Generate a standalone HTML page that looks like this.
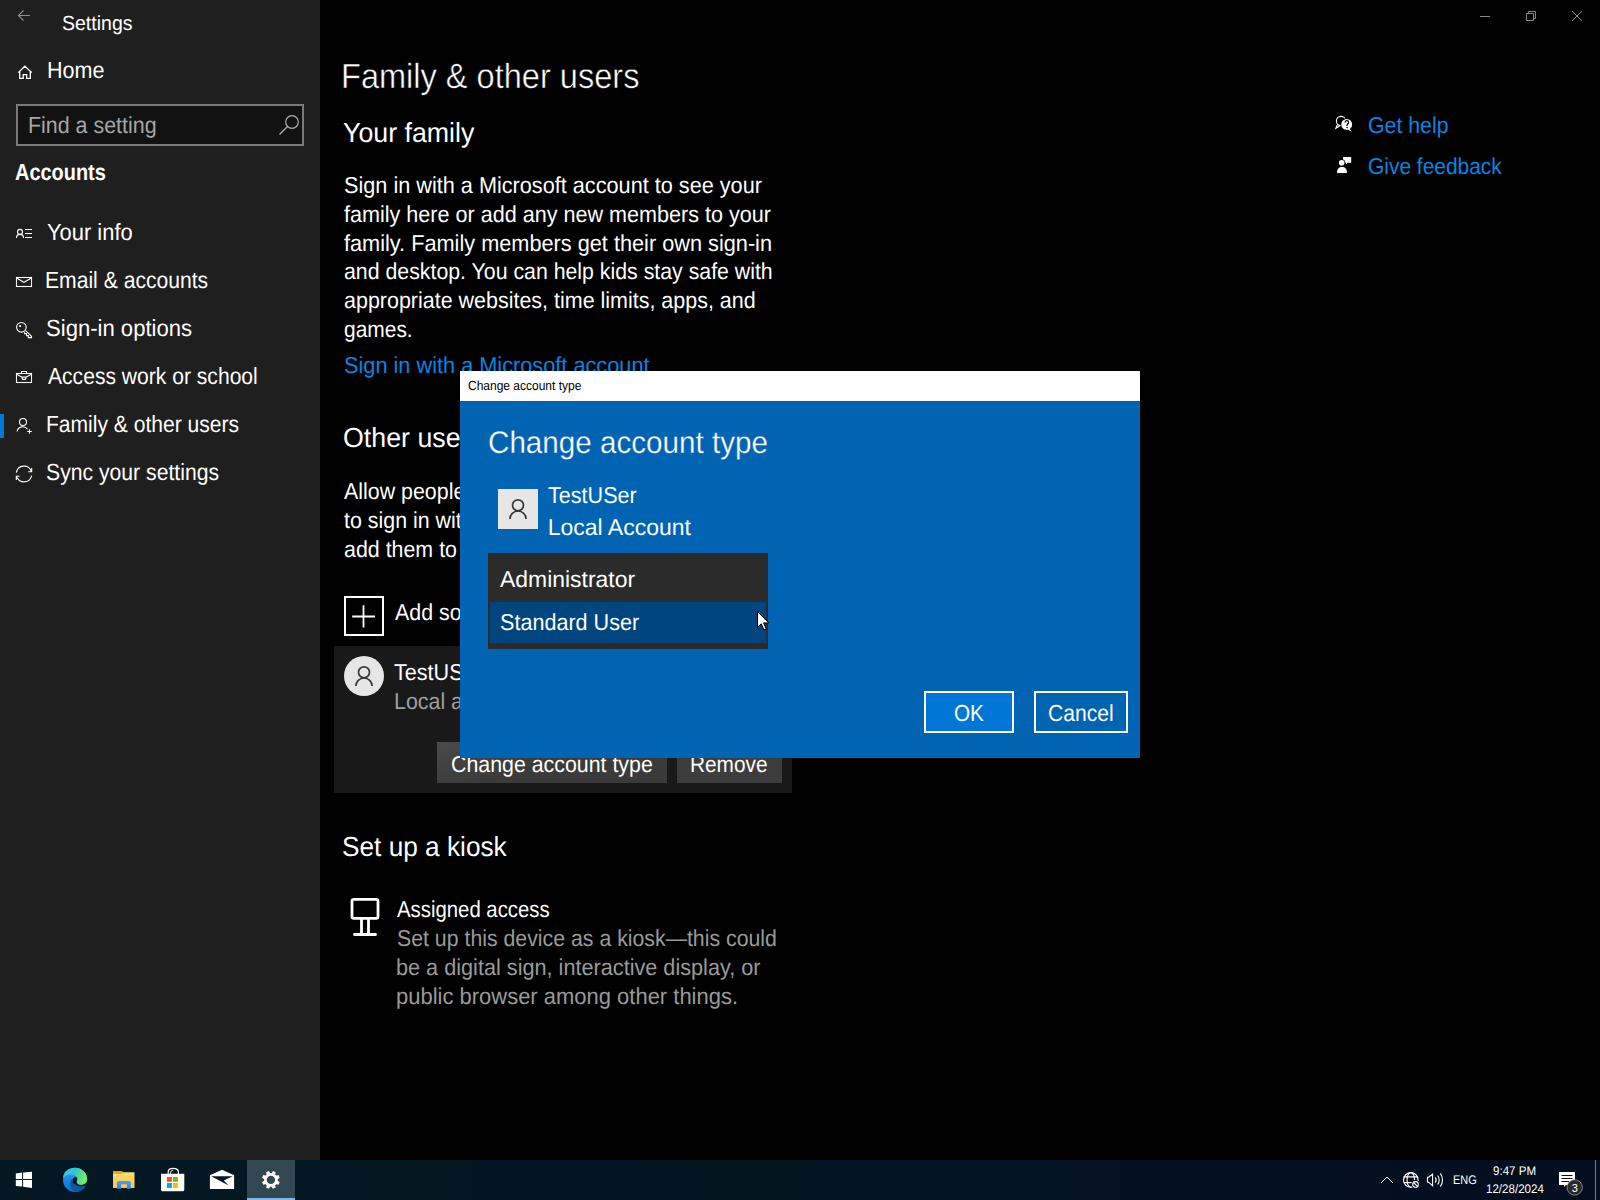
<!DOCTYPE html>
<html><head><meta charset="utf-8"><title>Settings</title>
<style>
html,body{margin:0;padding:0;}
body{width:1600px;height:1200px;overflow:hidden;background:#000;position:relative;font-family:"Liberation Sans",sans-serif;}
.t{position:absolute;white-space:nowrap;transform-origin:0 0;text-rendering:geometricPrecision;}
.a{position:absolute;}
svg{position:absolute;overflow:visible;}
</style></head><body>
<!-- sidebar -->
<div class="a" style="left:0;top:0;width:320px;height:1160px;background:#1f1f1f"></div>
<div class="a" style="left:16px;top:104px;width:284px;height:38px;border:2px solid #7a7a7a;background:#121212"></div>
<svg style="left:0;top:0" width="320" height="520" fill="none" stroke="#fff" stroke-width="1.1">
  <!-- back arrow -->
  <path d="M18.5 15.5 H30 M23.5 10.5 L18.5 15.5 L23.5 20.5" stroke="#8c8c8c"/>
  <!-- home -->
  <path d="M18.3 72.6 L24.8 66.2 L31.7 72.6 M19.7 71.6 V78.4 H23.2 V74.6 H26.6 V78.4 H30.3 V71.6" stroke-width="1.3"/>
  <!-- search -->
  <circle cx="292" cy="122" r="6.3" stroke="#adadad" stroke-width="1.2"/>
  <path d="M287.5 126.5 L279.5 134.5" stroke="#adadad" stroke-width="1.2"/>
  <!-- your info -->
  <circle cx="20" cy="231.9" r="2.5"/>
  <path d="M16.5 238 A3.5 3.6 0 0 1 23.5 238 M25 229.5 H32 M25 233.5 H32 M25 237.5 H32"/>
  <!-- email -->
  <rect x="16.5" y="277.5" width="15" height="9"/>
  <path d="M17 278.3 L24 282.3 L31 278.3"/>
  <!-- key -->
  <circle cx="21.4" cy="327.3" r="4.8"/>
  <rect x="19.2" y="325.2" width="1.8" height="1.8" fill="#fff" stroke="none"/>
  <path d="M25.6 330.6 L31.5 336.3 V337.6 H28.3 V335.6 H26.5 V333.6 H24.6 V332.2" stroke-linejoin="miter"/>
  <!-- briefcase -->
  <rect x="16.5" y="373.5" width="15" height="9"/>
  <path d="M21.5 373.5 V371.5 H26.5 V373.5 M17 374.5 L22.2 377.3 M25.8 377.3 L31 374.5"/>
  <path d="M22.6 377.1 H25.4 L26 378.2 L25.4 379.4 H22.6 L22 378.2 Z"/>
  <!-- family -->
  <circle cx="23" cy="422" r="3.5"/>
  <path d="M17 431.5 A5.9 5.9 0 0 1 27.6 429.2 M29.5 429.2 V433.8 M27.2 431.5 H31.8" />
  <!-- sync -->
  <path d="M16.4 472.6 A7.7 7.7 0 0 1 31.3 471.4 M28.2 471.7 H31.7 V468 M31.6 475.6 A7.7 7.7 0 0 1 17.1 477.5 M19.6 476.3 H16.3 V480"/>
</svg>
<div class="a" style="left:0;top:414px;width:4px;height:24px;background:#0078d7"></div>
<div class="t" id="settings" style="left:62.00px;top:14px;font-size:20.4px;line-height:20.4px;color:#fff;transform:scaleX(0.9567);">Settings</div>
<div class="t" id="home" style="left:47.24px;top:59px;font-size:23.4px;line-height:23.4px;color:#fff;transform:scaleX(0.9217);">Home</div>
<div class="t" id="find" style="left:28.09px;top:114px;font-size:23.2px;line-height:23.2px;color:#a6a6a6;transform:scaleX(0.9237);">Find a setting</div>
<div class="t" id="accounts" style="left:15.31px;top:161px;font-size:23.2px;line-height:23.2px;color:#fff;font-weight:700;transform:scaleX(0.8594);">Accounts</div>
<div class="t" id="yourinfo" style="left:47.06px;top:221px;font-size:23.4px;line-height:23.4px;color:#fff;transform:scaleX(0.9369);">Your info</div>
<div class="t" id="email" style="left:45.37px;top:269px;font-size:23.4px;line-height:23.4px;color:#fff;transform:scaleX(0.9029);">Email &amp; accounts</div>
<div class="t" id="signin" style="left:46.11px;top:317px;font-size:23.4px;line-height:23.4px;color:#fff;transform:scaleX(0.9440);">Sign-in options</div>
<div class="t" id="access" style="left:48.05px;top:365px;font-size:23.4px;line-height:23.4px;color:#fff;transform:scaleX(0.9015);">Access work or school</div>
<div class="t" id="family" style="left:46.28px;top:413px;font-size:23.4px;line-height:23.4px;color:#fff;transform:scaleX(0.9004);">Family &amp; other users</div>
<div class="t" id="sync" style="left:46.15px;top:461px;font-size:23.4px;line-height:23.4px;color:#fff;transform:scaleX(0.9054);">Sync your settings</div>
<!-- window controls -->
<svg style="left:1460px;top:0" width="140" height="40" fill="none" stroke="#888" stroke-width="1">
  <path d="M20 16.5 H30"/>
  <path d="M66.5 13.5 H73.5 V20.5 H66.5 Z M68.5 13.5 V11.5 H75.5 V18.5 H73.5"/>
  <path d="M112 11 L122 21 M122 11 L112 21"/>
</svg>
<!-- main content -->
<div class="t" id="h1" style="left:341.42px;top:60px;font-size:34.9px;line-height:34.9px;color:#fff;transform:scaleX(0.9327);-webkit-text-stroke:0.5px #000;">Family &amp; other users</div>
<div class="t" id="yourfamily" style="left:343.22px;top:119px;font-size:27.6px;line-height:27.6px;color:#fff;transform:scaleX(0.9694);">Your family</div>
<div class="t" id="p1" style="left:343.51px;top:174px;font-size:23.0px;line-height:23.0px;color:#fff;transform:scaleX(0.9421);">Sign in with a Microsoft account to see your</div>
<div class="t" id="p2" style="left:344.44px;top:203px;font-size:23.0px;line-height:23.0px;color:#fff;transform:scaleX(0.9380);">family here or add any new members to your</div>
<div class="t" id="p3" style="left:344.44px;top:232px;font-size:23.0px;line-height:23.0px;color:#fff;transform:scaleX(0.9442);">family. Family members get their own sign-in</div>
<div class="t" id="p4" style="left:343.61px;top:260px;font-size:23.0px;line-height:23.0px;color:#fff;transform:scaleX(0.9262);">and desktop. You can help kids stay safe with</div>
<div class="t" id="p5" style="left:343.61px;top:289px;font-size:23.0px;line-height:23.0px;color:#fff;transform:scaleX(0.9334);">appropriate websites, time limits, apps, and</div>
<div class="t" id="p6" style="left:343.63px;top:318px;font-size:23.0px;line-height:23.0px;color:#fff;transform:scaleX(0.9105);">games.</div>
<div class="t" id="link" style="left:343.51px;top:354px;font-size:23.0px;line-height:23.0px;color:#0a84e2;transform:scaleX(0.9446);">Sign in with a Microsoft account</div>
<div class="t" id="other" style="left:343.07px;top:424px;font-size:27.6px;line-height:27.6px;color:#fff;transform:scaleX(0.9700);">Other users</div>
<div class="t" id="allow1" style="left:344.46px;top:480px;font-size:23.0px;line-height:23.0px;color:#fff;transform:scaleX(0.9300);">Allow people who are not part of your family</div>
<div class="t" id="allow2" style="left:344.44px;top:509px;font-size:23.0px;line-height:23.0px;color:#fff;transform:scaleX(0.9300);">to sign in with their own accounts. This won't</div>
<div class="t" id="allow3" style="left:343.61px;top:538px;font-size:23.0px;line-height:23.0px;color:#fff;transform:scaleX(0.9300);">add them to your family.</div>
<div class="a" style="left:344px;top:596px;width:36px;height:36px;border:2px solid #fff"></div>
<svg style="left:0;top:0" width="1600" height="1200" fill="none" stroke="#fff" stroke-width="1.8">
  <path d="M352.2 616.5 H375 M363.5 605.2 V627.6"/>
</svg>
<div class="t" id="addsome" style="left:394.56px;top:601px;font-size:23.0px;line-height:23.0px;color:#fff;transform:scaleX(0.9300);">Add someone else to this PC</div>
<div class="a" style="left:334px;top:646px;width:458px;height:147px;background:#191919"></div>
<div class="a" style="left:344px;top:656px;width:40px;height:40px;border-radius:50%;background:#e6e6e6"></div>
<svg style="left:344px;top:656px" width="40" height="40" fill="none" stroke="#383838" stroke-width="1.7">
  <circle cx="20" cy="16.3" r="5.5"/>
  <path d="M11.9 30 A8.1 8 0 0 1 28.1 30"/>
</svg>
<div class="t" id="testuser" style="left:394.05px;top:661px;font-size:23.0px;line-height:23.0px;color:#fff;transform:scaleX(0.9382);">TestUSer</div>
<div class="t" id="localacc" style="left:394.34px;top:690px;font-size:23.0px;line-height:23.0px;color:#9f9f9f;transform:scaleX(0.9300);">Local account</div>
<div class="a" style="left:437px;top:742px;width:230px;height:41px;background:linear-gradient(160deg,#4a4a4a 0%,#3c3c3c 40%,#3a3a3a 100%)"></div>
<div class="a" style="left:677px;top:742px;width:105px;height:41px;background:#3d3d3d"></div>
<div class="t" id="btncat" style="left:451.13px;top:753px;font-size:23.0px;line-height:23.0px;color:#fff;transform:scaleX(0.9283);">Change account type</div>
<div class="t" id="btnrem" style="left:690.39px;top:753px;font-size:23.0px;line-height:23.0px;color:#fff;transform:scaleX(0.9053);">Remove</div>
<div class="t" id="kiosk" style="left:342.37px;top:833px;font-size:27.6px;line-height:27.6px;color:#fff;transform:scaleX(0.9503);">Set up a kiosk</div>
<svg style="left:0;top:0" width="1600" height="1200" fill="none" stroke="#fff" stroke-width="2.8">
  <rect x="352" y="899.3" width="26" height="19.1" rx="1.8"/>
  <path d="M361.5 919 V933 M368.5 919 V933"/>
  <path d="M354.5 934.5 H375.5" stroke-linecap="round"/>
</svg>
<div class="t" id="assigned" style="left:397.05px;top:898px;font-size:23.0px;line-height:23.0px;color:#fff;transform:scaleX(0.8848);">Assigned access</div>
<div class="t" id="k1" style="left:396.88px;top:927px;font-size:23.0px;line-height:23.0px;color:#9a9a9a;transform:scaleX(0.9257);">Set up this device as a kiosk—this could</div>
<div class="t" id="k2" style="left:396.36px;top:956px;font-size:23.0px;line-height:23.0px;color:#9a9a9a;transform:scaleX(0.9420);">be a digital sign, interactive display, or</div>
<div class="t" id="k3" style="left:396.34px;top:985px;font-size:23.0px;line-height:23.0px;color:#9a9a9a;transform:scaleX(0.9555);">public browser among other things.</div>
<!-- help links -->
<svg style="left:1330px;top:110px" width="30" height="70" fill="#fff" stroke="none">
  <circle cx="11" cy="11" r="4.6" fill="none" stroke="#fff" stroke-width="1.1"/>
  <path d="M7.6 14.2 L5.8 18.3 L9.6 16" fill="none" stroke="#fff" stroke-width="1.1"/>
  <circle cx="16.7" cy="14.4" r="6.3" fill="#000"/>
  <circle cx="16.7" cy="14.4" r="5.4"/>
  <path d="M19.5 18.5 L21.9 21.8 L17.5 19.6 Z"/>
  <path d="M15 12.6 C15 11.3 15.8 10.7 16.8 10.7 C17.9 10.7 18.6 11.4 18.6 12.4 C18.6 13.7 17 13.9 17 15.4 V15.9" fill="none" stroke="#000" stroke-width="1.2"/>
  <rect x="16.4" y="16.9" width="1.3" height="1.3" fill="#000"/>
  <path d="M13 47 H21.2 V52.8 H17.6 L16 54.6 V52.8 H13 Z"/>
  <circle cx="11.7" cy="52.8" r="3.6" fill="#000"/>
  <circle cx="11.7" cy="52.8" r="2.8"/>
  <path d="M7 63 C7 58.6 9 56.9 12 56.9 C15 56.9 17 58.6 17 63 Z"/>
</svg>
<div class="t" id="gethelp" style="left:1368.15px;top:114px;font-size:23.0px;line-height:23.0px;color:#0a84e2;transform:scaleX(0.9258);">Get help</div>
<div class="t" id="feedback" style="left:1368.16px;top:155px;font-size:23.0px;line-height:23.0px;color:#0a84e2;transform:scaleX(0.9099);">Give feedback</div>
<!-- dialog -->
<div class="a" style="left:460px;top:371px;width:680px;height:30px;background:#fff"></div>
<div class="a" style="left:460px;top:401px;width:680px;height:357px;background:#0064b3"></div>
<div class="t" id="dtitle" style="left:468.12px;top:379px;font-size:13.2px;line-height:13.2px;color:#000;transform:scaleX(0.9091);">Change account type</div>
<div class="t" id="dbig" style="left:487.55px;top:427px;font-size:31.2px;line-height:31.2px;color:#fff;transform:scaleX(0.9499);-webkit-text-stroke:0.3px #0064b3;">Change account type</div>
<div class="a" style="left:498px;top:489px;width:40px;height:40px;background:#e6e6e6"></div>
<svg style="left:498px;top:489px" width="40" height="40" fill="none" stroke="#383838" stroke-width="1.7">
  <circle cx="20" cy="16.3" r="5.5"/>
  <path d="M11.9 30 A8.1 8 0 0 1 28.1 30"/>
</svg>
<div class="t" id="dtest" style="left:547.80px;top:484px;font-size:23.0px;line-height:23.0px;color:#fff;transform:scaleX(0.9382);">TestUSer</div>
<div class="t" id="dlocal" style="left:547.72px;top:516px;font-size:23.0px;line-height:23.0px;color:#fff;">Local Account</div>
<div class="a" style="left:488px;top:553px;width:280px;height:96px;background:#2b2b2b"></div>
<div class="a" style="left:490px;top:602px;width:276px;height:41px;background:#00457e"></div>
<div class="t" id="dadmin" style="left:500.12px;top:568px;font-size:23.0px;line-height:23.0px;color:#fff;transform:scaleX(0.9970);">Administrator</div>
<div class="t" id="dstd" style="left:499.92px;top:611px;font-size:23.0px;line-height:23.0px;color:#fff;transform:scaleX(0.9382);">Standard User</div>
<div class="a" style="left:924px;top:691px;width:86px;height:38px;border:2px solid #fff;background:#0077d6"></div>
<div class="a" style="left:1034px;top:691px;width:90px;height:38px;border:2px solid #fff"></div>
<div class="t" id="ok" style="left:954.09px;top:702px;font-size:23.2px;line-height:23.2px;color:#fff;transform:scaleX(0.8939);">OK</div>
<div class="t" id="cancel" style="left:1047.84px;top:702px;font-size:23.2px;line-height:23.2px;color:#fff;transform:scaleX(0.9100);">Cancel</div>
<!-- cursor -->
<svg style="left:757px;top:611px" width="14" height="22">
  <path d="M0.5 0.5 V16.5 L4.3 12.8 L7 19 L9.3 18 L6.6 11.9 H11.8 Z" fill="#fff" stroke="#000" stroke-width="1"/>
</svg>
<!-- taskbar -->
<div class="a" style="left:0;top:1160px;width:1600px;height:40px;background:linear-gradient(90deg,#021822 0%,#031520 40%,#030e1e 100%)"></div>
<div class="a" style="left:247px;top:1160px;width:48px;height:40px;background:#334750"></div>
<div class="a" style="left:247px;top:1198px;width:48px;height:2px;background:#76b9ed"></div>
<svg style="left:0;top:1160px" width="1600" height="40">
  <!-- windows logo -->
  <path d="M15.8 13.4 L22.1 12.6 V18.9 H15.8 Z M23.1 12.5 L32 11.8 V18.9 H23.1 Z M15.8 19.9 H22.1 V26.6 L15.8 25.9 Z M23.1 19.9 H32 V28 L23.1 26.8 Z" fill="#fff"/>
  <!-- edge -->
  <defs>
    <linearGradient id="eb" x1="0" y1="0" x2="0" y2="1"><stop offset="0" stop-color="#2a9ff0"/><stop offset="1" stop-color="#0a72d6"/></linearGradient>
    <linearGradient id="eg" x1="0" y1="0" x2="1" y2="0.3"><stop offset="0" stop-color="#38c6f6"/><stop offset="0.5" stop-color="#2fc3cf"/><stop offset="1" stop-color="#74ec5c"/></linearGradient>
  </defs>
  <g transform="translate(58 4)">
    <circle cx="17.1" cy="15.9" r="12.1" fill="url(#eb)"/>
    <path d="M5 14 C5.5 7.5 10.5 3.8 17.1 3.8 C23.6 3.8 29.2 8.6 29.2 15.5 C29.2 19 26 20.8 22.5 20.8 C19.5 20.8 17.8 19.2 18.6 17.2 C19.3 15.5 19.8 14.2 18.8 13 C16.5 10.2 9.5 8.8 5 14 Z" fill="url(#eg)"/>
    <path d="M14 15 C12.3 16.5 11.8 19 12 21 C12.3 24.5 14.5 27 17.5 27.5 C21.5 27.9 25.5 25.5 27.2 21.9 C25.5 22.6 23.5 22.8 21.5 22.5 C18 22 15.5 19.8 14.6 17.5 Z" fill="#1356a6"/>
    <path d="M16 19.5 C18 21.6 20.5 22.4 23 22.4 C25 22.4 26.6 22.1 27.7 21.9 L30 16.5 L29.3 16.2 C28.6 19.6 25.8 21 22.5 21 C20 21 18.6 19.9 18.3 18.5 Z" fill="#021822"/>
    <path d="M14.4 16.2 C14.6 13.8 16.5 12.8 18.3 13.3 C19.5 13.7 19.6 15.2 18.9 16.6 C18.2 18.2 18.8 19.6 20.8 20.5 C18 21 15.6 20.2 14.8 18.5 Z" fill="#021822"/>
  </g>
  <!-- folder -->
  <defs><linearGradient id="fy" x1="0" y1="0" x2="0" y2="1"><stop offset="0" stop-color="#ffdc72"/><stop offset="1" stop-color="#f7c64e"/></linearGradient>
  <linearGradient id="fb" x1="0" y1="0" x2="0" y2="1"><stop offset="0" stop-color="#4aa2ee"/><stop offset="1" stop-color="#2f86db"/></linearGradient></defs>
  <path d="M113 11 H122 L123.2 12.2 V14.5 H113 Z" fill="#e4a30c"/>
  <path d="M113 13.7 H122 L123 12.2 H134.5 V28 H113 Z" fill="url(#fy)"/>
  <path d="M117 28.8 V22.3 Q117 21 118.3 21 H129.5 Q130.8 21 130.8 22.3 V28.8 H126.8 V24.3 H121.2 V28.8 Z" fill="url(#fb)"/>
  <!-- store -->
  <path d="M168.2 14 V11.8 C168.2 9.6 170.4 8.3 173 8.3 C175.8 8.3 178.4 9.6 178.4 11.8 V14" fill="none" stroke="#fff" stroke-width="1.2"/>
  <path d="M170.6 14 V12.8 C170.6 11.2 171.8 10.2 173.3 10.2" fill="none" stroke="#fff" stroke-width="1"/>
  <path d="M161 13.8 H184.3 V29.8 C184.3 30.7 183.6 31.3 182.7 31.3 H162.6 C161.7 31.3 161 30.7 161 29.8 Z" fill="#fff"/>
  <rect x="167" y="17" width="4.9" height="4.8" fill="#f25022"/>
  <rect x="173" y="17" width="4.9" height="4.8" fill="#7fba00"/>
  <rect x="167" y="23" width="4.9" height="4.9" fill="#00a4ef"/>
  <rect x="173" y="23" width="4.9" height="4.9" fill="#ffb900"/>
  <!-- mail -->
  <path d="M209.9 15.3 L222 9.7 L234.1 15.3 V28.9 H209.9 Z" fill="#fff"/>
  <path d="M211.2 16.2 H232.7 L223.8 20.5 L228.7 25.6 Z" fill="#021822"/>
  <!-- gear -->
  <g transform="translate(270.9 19.9)" fill="#fff">
    <defs><path id="gt" d="M-1.9 -6 L1.9 -6 L1.5 -8.9 L-1.5 -8.9 Z"/></defs>
    <use href="#gt" transform="rotate(22.5)"/><use href="#gt" transform="rotate(67.5)"/><use href="#gt" transform="rotate(112.5)"/><use href="#gt" transform="rotate(157.5)"/><use href="#gt" transform="rotate(202.5)"/><use href="#gt" transform="rotate(247.5)"/><use href="#gt" transform="rotate(292.5)"/><use href="#gt" transform="rotate(337.5)"/>
    <circle r="5.55" fill="none" stroke="#fff" stroke-width="2.8"/>
  </g>
  <!-- tray -->
  <path d="M1381 23 L1387 17 L1393 23" fill="none" stroke="#fff" stroke-width="1"/>
  <g fill="none" stroke="#fff" stroke-width="1.1">
    <circle cx="1410.8" cy="19.9" r="7.3"/>
    <ellipse cx="1410.8" cy="19.9" rx="3.8" ry="7.3"/>
    <path d="M1403.8 16.9 H1417.8 M1403.8 22.6 H1417.8"/>
    <circle cx="1415.5" cy="24.4" r="4.3" fill="#030f1f" stroke="none"/>
    <circle cx="1415.5" cy="24.4" r="2.8"/>
    <path d="M1413.6 22.5 L1417.4 26.3"/>
    <path d="M1427.5 17.2 H1428.6 L1432.6 14.2 V25.7 L1428.6 22.2 H1427.5 Z M1435.2 17.3 C1436.3 18.8 1436.3 21.2 1435.2 22.7 M1437.7 15.5 C1439.7 18 1439.7 22 1437.7 24.5 M1440.3 13.3 C1443.2 17 1443.2 23 1440.3 26.7"/>
  </g>
  <!-- notification -->
  <path d="M1559 12 H1575 V25 H1566 L1564 27 V25 H1559 Z" fill="#fff"/>
  <path d="M1561.5 15.5 H1572.5 M1561.5 18.5 H1572.5 M1561.5 21.5 H1569" stroke="#030e1e" stroke-width="1"/>
  <circle cx="1574.7" cy="27.4" r="7.7" fill="#2a2a2a" stroke="#9a9a9a" stroke-width="0.8"/>
  <text x="1574.7" y="31.5" font-size="11" text-anchor="middle" fill="#fff" font-family="Liberation Sans">3</text>
  <path d="M1595.5 0 V40" stroke="#7a7a7a" stroke-width="1"/>
</svg>
<div class="t" id="eng" style="left:1452.85px;top:1174px;font-size:12.5px;line-height:12.5px;color:#fff;transform:scaleX(0.8744);">ENG</div>
<div class="t" id="time" style="left:1493.35px;top:1165px;font-size:12.5px;line-height:12.5px;color:#fff;transform:scaleX(0.9239);">9:47 PM</div>
<div class="t" id="date" style="left:1486.23px;top:1183px;font-size:12.5px;line-height:12.5px;color:#fff;transform:scaleX(0.9255);">12/28/2024</div>
</body></html>
